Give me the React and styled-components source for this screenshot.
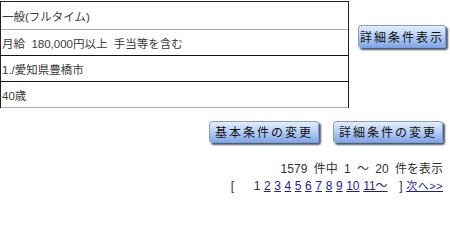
import React from "react";
import styled, { createGlobalStyle } from "styled-components";

const GlobalStyle = createGlobalStyle`
  body {
    margin: 0;
    background: #fff;
    font-family: "Liberation Sans", "Noto Sans CJK JP", sans-serif;
    color: #333;
  }
`;

const Page = styled.div`
  width: 450px;
  padding-top: 1px;
`;

const Top = styled.div`
  display: flex;
  align-items: flex-start;
`;

const Table = styled.div`
  width: 347px;
  border: 1px solid #222;
  border-bottom: none;
`;

const Row = styled.div`
  display: flex;
  align-items: center;
  height: ${props => props.h}px;
  padding-left: 1px;
  font-size: 11.5px;
  color: #3a3a3a;
  white-space: pre;
  border-bottom: 1px solid ${props => (props.dark ? "#111" : "#aaa")};
`;

const Side = styled.div`
  padding: 24px 0 0 9px;
`;

const Button = styled.button`
  height: ${props => (props.tight ? 23 : 22)}px;
  padding: 0 ${props => (props.tight ? 1 : 5)}px;
  font-family: "Noto Sans CJK JP", sans-serif;
  font-size: 12px;
  letter-spacing: 2px;
  color: #111;
  border: 1px solid #7c9fd8;
  border-radius: 3px;
  background: linear-gradient(#e4eefc 0%, #b9d0f5 45%, #7fa7ea 100%);
  box-shadow: 2px 2px 2px #555;
  cursor: pointer;
  line-height: 1;
  white-space: nowrap;
`;

const ButtonRow = styled.div`
  display: flex;
  justify-content: flex-end;
  gap: 14px;
  padding: 13px 7px 0 0;
`;

const Count = styled.div`
  margin-top: 19px;
  padding-right: 7px;
  text-align: right;
  font-size: 12px;
  line-height: 14px;
  color: #333;
  word-spacing: 3px;
`;

const Pager = styled.div`
  display: flex;
  justify-content: flex-end;
  align-items: baseline;
  gap: 3.6px;
  margin-top: 3px;
  padding-right: 7px;
  font-size: 12px;
  line-height: 14px;
  color: #333;
`;

const Bracket = styled.span`
  margin: ${props => props.m};
`;

const PageLink = styled.a`
  color: #1c1c9c;
  text-decoration: underline;
  font-size: ${props => (props.small ? 11 : 12)}px;
  letter-spacing: ${props => (props.small ? 0.5 : 0)}px;
`;

const rows = [
  { text: "一般(フルタイム)", h: 27 },
  { text: "月給  180,000円以上  手当等を含む", h: 25 },
  { text: "1./愛知県豊橋市", h: 25 },
  { text: "40歳", h: 25 },
];

export default function App() {
  const pages = ["2", "3", "4", "5", "6", "7", "8", "9", "10", "11～"];
  return (
    <Page>
      <GlobalStyle />
      <Top>
        <Table>
          {rows.map((r, i) => (
            <Row key={i} h={r.h} dark={i === 1 || i === 2}>
              {r.text}
            </Row>
          ))}
        </Table>
        <Side>
          <Button tight>詳細条件表示</Button>
        </Side>
      </Top>
      <ButtonRow>
        <Button>基本条件の変更</Button>
        <Button>詳細条件の変更</Button>
      </ButtonRow>
      <Count>1579 件中 1 ～ 20 件を表示</Count>
      <Pager>
        <Bracket m="0 16px 0 0">[</Bracket>
        <span>1</span>
        {pages.map(p => (
          <PageLink key={p} href="#">
            {p}
          </PageLink>
        ))}
        <Bracket m="0 0 0 8px">]</Bracket>
        <PageLink small href="#">
          次へ&gt;&gt;
        </PageLink>
      </Pager>
    </Page>
  );
}
